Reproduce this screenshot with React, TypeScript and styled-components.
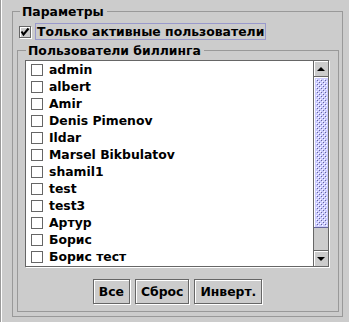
import React from 'react';
import styled, { createGlobalStyle } from 'styled-components';

const GlobalStyle = createGlobalStyle`
  html, body {
    margin: 0;
    padding: 0;
    background: #cccccc;
  }
  body {
    font-family: "DejaVu Sans", "Liberation Sans", sans-serif;
    font-size: 12.4px;
    font-weight: bold;
    color: #000;
  }
`;

const Window = styled.div`
  box-sizing: border-box;
  height: 322px;
  padding: 11px 0 0 12px;
  box-shadow: inset 1px 0 #9a9a9a, inset 2px 0 #ffffff;
`;

// titled border, Metal style: a thin gray line with the caption cut into it
const Group = styled.section<{ $pad: string; $width?: number; $top?: number }>`
  box-sizing: border-box;
  border: 1px solid #999999;
  padding: ${({ $pad }) => $pad};
  margin-top: ${({ $top }) => $top ?? 0}px;
  width: ${({ $width }) => ($width ? `${$width}px` : 'auto')};
`;

const Title = styled.div<{ $offset: number }>`
  width: fit-content;
  margin: -8px 0 0 ${({ $offset }) => $offset}px;
  padding: 0 3px 0 2px;
  line-height: 15px;
  background: #cccccc;
  color: #000;
`;

const OptionRow = styled.div`
  display: flex;
  align-items: center;
  height: 17px;
  margin-top: 4px;
`;

const Box = styled.span<{ $bg: string }>`
  box-sizing: border-box;
  display: inline-flex;
  align-items: center;
  justify-content: center;
  flex: none;
  width: 12px;
  height: 12px;
  border: 1px solid #666666;
  background: ${({ $bg }) => $bg};
  box-shadow: 1px 1px 0 #ffffff, inset 1px 1px 0 #ffffff;
`;

const FocusLabel = styled.span`
  box-sizing: border-box;
  height: 17px;
  line-height: 15px;
  margin-left: 4px;
  padding: 0 1px;
  border: 1px solid #9999cc;
`;

const ListBox = styled.div`
  box-sizing: border-box;
  display: flex;
  width: 304px;
  height: 207px;
  margin-top: 2px;
  border: 1px solid #666666;
  box-shadow: 1px 1px 0 #ffffff;
  background: #ffffff;
`;

const Items = styled.div`
  flex: 1;
  overflow: hidden;
`;

const Item = styled.div`
  display: flex;
  align-items: center;
  height: 17px;
  padding-left: 5px;
  line-height: 17px;
  white-space: nowrap;
`;

const ItemText = styled.span`
  margin-left: 6px;
`;

const ScrollBar = styled.div`
  display: flex;
  flex-direction: column;
  width: 14px;
  border-left: 1px solid #666666;
  background: #cccccc;
`;

const Arrow = styled.div<{ $down?: boolean }>`
  box-sizing: border-box;
  display: flex;
  align-items: center;
  justify-content: center;
  height: 16px;
  background: #cccccc;
  box-shadow: inset 1px 1px 0 #ffffff;
  border-${({ $down }) => ($down ? 'top' : 'bottom')}: 1px solid #666666;
`;

const Thumb = styled.div`
  box-sizing: border-box;
  height: 151px;
  padding: 2px 1px 1px 2px;
  background: #ccccff;
  border-bottom: 1px solid #666699;
  box-shadow: inset 1px 1px 0 #ffffff;
`;

const Track = styled.div`
  flex: 1;
`;

const Buttons = styled.div`
  display: flex;
  justify-content: center;
  gap: 5px;
  margin-top: 12px;
`;

const Button = styled.button`
  box-sizing: border-box;
  height: 25px;
  padding: 0 5px;
  margin: 0;
  border: 1px solid #666666;
  background: #cccccc;
  box-shadow: inset 1px 1px 0 #ffffff, 1px 1px 0 #ffffff;
  font: inherit;
  color: #000;
`;

const users = [
  'admin',
  'albert',
  'Amir',
  'Denis Pimenov',
  'Ildar',
  'Marsel Bikbulatov',
  'shamil1',
  'test',
  'test3',
  'Артур',
  'Борис',
  'Борис тест',
];

const CheckMark = () => (
  <svg width="10" height="10" viewBox="0 0 10 10">
    <path d="M1.5 4.5 L3.5 7.5 L8.5 1.5" fill="none" stroke="#000" strokeWidth="2" />
  </svg>
);

const Triangle = ({ down }: { down?: boolean }) => (
  <svg width="8" height="4" viewBox="0 0 8 4">
    <polygon points={down ? '0,0 8,0 4,4' : '4,0 8,4 0,4'} fill="#000" />
  </svg>
);

const Bumps = () => (
  <svg width="100%" height="100%">
    <defs>
      <pattern id="bumps" width="4" height="4" patternUnits="userSpaceOnUse">
        <rect x="0" y="0" width="1" height="1" fill="#ffffff" />
        <rect x="2" y="2" width="1" height="1" fill="#ffffff" />
        <rect x="1" y="1" width="1" height="1" fill="#666699" />
        <rect x="3" y="3" width="1" height="1" fill="#666699" />
      </pattern>
    </defs>
    <rect width="100%" height="100%" fill="url(#bumps)" />
  </svg>
);

const App: React.FC = () => {
  return (
    <>
      <GlobalStyle />
      <Window>
        <Group $pad="0 3px 4px 4px" $width={331}>
          <Title $offset={3}>Параметры</Title>
          <OptionRow>
            <Box $bg="#cccccc" style={{ marginLeft: 2 }}>
              <CheckMark />
            </Box>
            <FocusLabel>Только активные пользователи</FocusLabel>
          </OptionRow>

          <Group $pad="0 8px 7px 7px" $top={10}>
            <Title $offset={1}>Пользователи биллинга</Title>
            <ListBox>
              <Items>
                {users.map((u) => (
                  <Item key={u}>
                    <Box $bg="#ffffff" />
                    <ItemText>{u}</ItemText>
                  </Item>
                ))}
              </Items>
              <ScrollBar>
                <Arrow>
                  <Triangle />
                </Arrow>
                <Thumb>
                  <Bumps />
                </Thumb>
                <Track />
                <Arrow $down>
                  <Triangle down />
                </Arrow>
              </ScrollBar>
            </ListBox>
            <Buttons>
              <Button>Все</Button>
              <Button>Сброс</Button>
              <Button>Инверт.</Button>
            </Buttons>
          </Group>
        </Group>
      </Window>
    </>
  );
};

export default App;
